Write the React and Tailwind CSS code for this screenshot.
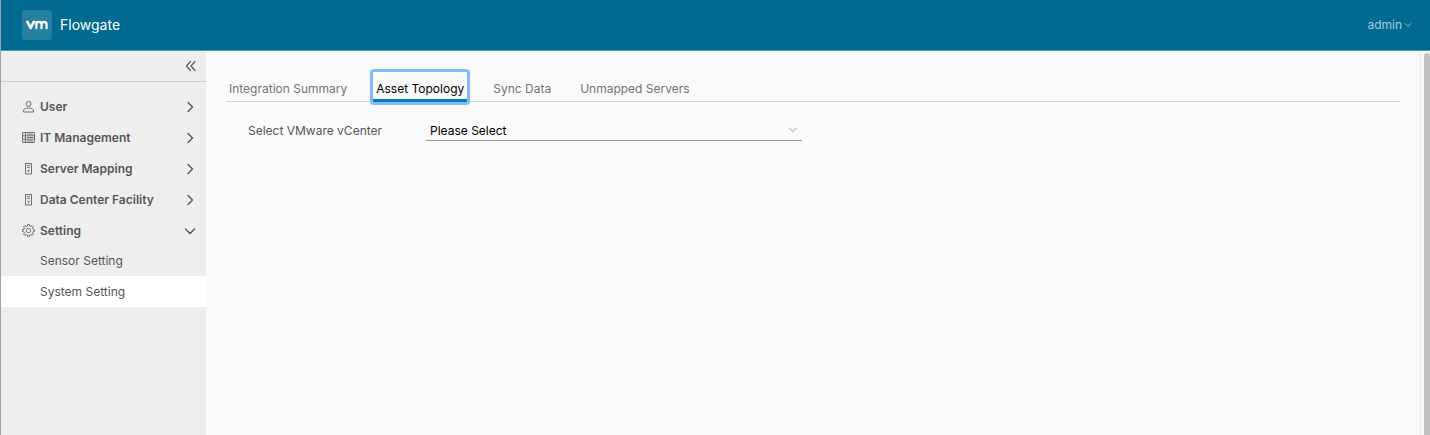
import { useState } from "react";

function Chevron({ className, d = "M2 4 6 8 10 4" }) {
  return (
    <svg viewBox="0 0 12 12" className={className} fill="none" stroke="currentColor" strokeLinecap="round" strokeLinejoin="round" aria-hidden="true">
      <path d={d} />
    </svg>
  );
}

function UserIcon() {
  return (
    <>
      <circle cx="6.5" cy="3.8" r="2.5" />
      <path d="M1.5 12V10.2C2 8.8 4.2 8 6.5 8S11 8.8 11.5 10.2V12Z" />
    </>
  );
}

function RackIcon() {
  return (
    <>
      <rect x="0.5" y="1.5" width="12" height="10" rx="0.5" />
      <path d="M0.5 4.8H12.5M0.5 8.2H12.5M3.5 1.5V11.5M5 3.2H11M5 6.5H11M5 9.9H11M1.8 3.2H2.2M1.8 6.5H2.2M1.8 9.9H2.2" />
    </>
  );
}

function HostIcon() {
  return (
    <>
      <path d="M3.5 1.5H9.5V12H3.5Z" />
      <path d="M3.5 1.5V12M9.5 1.5V12M5 3.5H8M5 5.4H8" strokeWidth="0.9" />
      <path d="M5.4 8.2H7.6L6.5 9.6ZM6.5 9.4V10.6" strokeWidth="0.7" />
    </>
  );
}

function CogIcon() {
  return (
    <>
      <circle cx="6.5" cy="6.5" r="2.2" />
      <path d="M5.5.6H7.5L7.8 2.1 8.8 2.5 10.1 1.6 11.4 2.9 10.5 4.2 10.9 5.2 12.4 5.5V7.5L10.9 7.8 10.5 8.8 11.4 10.1 10.1 11.4 8.8 10.5 7.8 10.9 7.5 12.4H5.5L5.2 10.9 4.2 10.5 2.9 11.4 1.6 10.1 2.5 8.8 2.1 7.8.6 7.5V5.5L2.1 5.2 2.5 4.2 1.6 2.9 2.9 1.6 4.2 2.5 5.2 2.1Z" />
    </>
  );
}

const groups = [
  { label: "User", Icon: UserIcon },
  { label: "IT Management", Icon: RackIcon },
  { label: "Server Mapping", Icon: HostIcon },
  { label: "Data Center Facility", Icon: HostIcon },
  { label: "Setting", Icon: CogIcon, children: ["Sensor Setting", "System Setting"] },
];

const tabs = ["Integration Summary", "Asset Topology", "Sync Data", "Unmapped Servers"];

function Sidebar() {
  return (
    <nav className="w-[205px] shrink-0 bg-[#eeeeee] text-xs text-[#565656]" aria-label="Main">
      <div className="flex h-[31px] items-center justify-end border-b border-[#d0d0d0] pr-[9px]">
        <button type="button" aria-label="Collapse menu">
          <svg viewBox="0 0 12 12" className="size-3" fill="none" stroke="#565656" strokeWidth="1.2" strokeLinecap="round" strokeLinejoin="round" aria-hidden="true">
            <path d="M5.5 1.5 1.5 6 5.5 10.5M10 1.5 6 6 10 10.5" />
          </svg>
        </button>
      </div>
      <ul className="pt-[9px]">
        {groups.map(({ label, Icon, children }) => (
          <li key={label}>
            <button type="button" aria-expanded={Boolean(children)} className="flex h-[31px] w-full items-center pr-[10px] pl-[21px] font-semibold">
              <svg viewBox="0 0 13 13" className="mr-[5px] size-[13px]" fill="none" stroke="#6e6e6e" strokeWidth="1" strokeLinejoin="round" aria-hidden="true">
                <Icon />
              </svg>
              {label}
              <Chevron className="ml-auto size-3 stroke-[1.4]" d={children ? "M1.5 4 6 8.5 10.5 4" : "M4 1.5 8.5 6 4 10.5"} />
            </button>
            {children && (
              <ul>
                {children.map((child) => (
                  <li key={child}>
                    <a
                      href={"#" + child.toLowerCase().replace(" ", "-")}
                      className={"flex items-center pl-[39px] " + (child === "System Setting" ? "h-[31px] bg-white" : "h-[30px]")}
                    >
                      {child}
                    </a>
                  </li>
                ))}
              </ul>
            )}
          </li>
        ))}
      </ul>
    </nav>
  );
}

export default function App() {
  const [active, setActive] = useState("Asset Topology");
  return (
    <div className="flex min-h-screen flex-col border-l border-[#a3a3a3] bg-[#fafafa] font-['Inter',sans-serif]">
      <header className="flex h-[51px] items-center border-b border-[#4d9abb] bg-[#006a91] pr-[18px] pl-[21px] text-white">
        <a href="#home" className="flex items-center gap-2">
          <span className="flex size-[30px] items-center justify-center rounded-[3px] bg-[#25809f]">
            <svg viewBox="0 0 22 10" className="h-[10px] w-[22px]" fill="none" stroke="white" strokeWidth="2.2" strokeLinecap="round" strokeLinejoin="round" role="img" aria-label="VMware">
              <path d="M1.4 1.8 4.6 8 7.8 1.8" strokeWidth="2.6" />
              <path d="M10.4 1.8V8.2M10.4 4.4C10.4 2.6 11.5 1.8 13 1.8S15.5 2.6 15.5 4.4V8.2M15.5 4.4C15.5 2.6 16.6 1.8 18.1 1.8S20.6 2.6 20.6 4.4V8.2" />
            </svg>
          </span>
          <span className="text-sm">Flowgate</span>
        </a>
        <button type="button" className="ml-auto flex items-center gap-[2px] text-xs text-[#a6cbda]">
          admin
          <Chevron className="size-2 stroke-[1.4]" />
        </button>
      </header>
      <div className="flex grow">
        <Sidebar />
        <main className="min-w-0 grow px-5 pt-[21px]">
          <div role="tablist" className="flex h-[30px] gap-[23px] border-b border-[#d0d0d0] text-xs">
            {tabs.map((tab) => (
              <button
                key={tab}
                type="button"
                role="tab"
                aria-selected={tab === active}
                onClick={() => setActive(tab)}
                className={
                  "-mb-px px-[3px] pt-[3px] " +
                  (tab === active
                    ? "rounded-[1px] text-black shadow-[inset_0_-3px_#007cbb] outline-3 outline-[#83bcfd]"
                    : "text-[#737373]")
                }
              >
                {tab}
              </button>
            ))}
          </div>
          <div className="flex items-center pt-[18px] pl-[22px] text-xs">
            <label htmlFor="vcenter" className="w-[178px] text-[#565656]">Select VMware vCenter</label>
            <div className="relative w-[376px]">
              <select id="vcenter" className="h-[21px] w-full appearance-none border-b border-[#9a9a9a] bg-transparent px-1 pt-[2px] text-black outline-none">
                <option>Please Select</option>
              </select>
              <Chevron className="pointer-events-none absolute top-[5px] right-1 size-[10px] text-[#8c8c8c]" />
            </div>
          </div>
        </main>
        <div className="flex w-[10px] shrink-0 border-l border-[#e8e8e8] pt-[2px] pl-[3px]" aria-hidden="true">
          <div className="w-full rounded-t-full bg-[#c1c1c1]" />
        </div>
      </div>
    </div>
  );
}
